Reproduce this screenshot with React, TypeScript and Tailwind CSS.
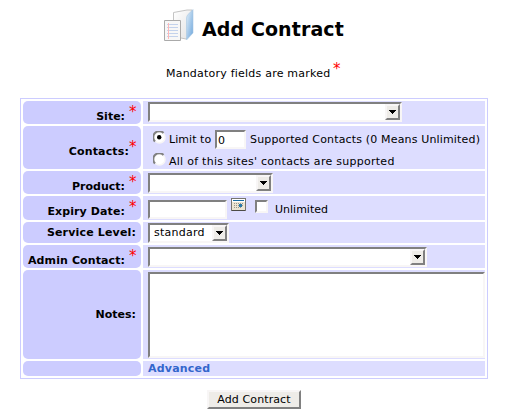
import type { ReactNode } from "react";

const sunken =
  "border-2 border-t-[#808080] border-l-[#808080] border-r-[#f8f6f6] border-b-[#f8f6f6] bg-white";

function Star({ className = "" }: { className?: string }) {
  return (
    <span className={`block h-4 w-[7px] shrink-0 text-[15px] leading-4 text-[#ff0000] ${className}`}>*</span>
  );
}

function Arrow() {
  return (
    <span className="flex h-4 w-[15px] shrink-0 items-center justify-center border-2 border-t-[#f8f6f6] border-l-[#f8f6f6] border-r-[#808080] border-b-[#808080] bg-[#eeece8]">
      <svg width="7" height="4" viewBox="0 0 7 4" shapeRendering="crispEdges">
        <path d="M0 0h7v1h-1v1h-1v1h-1v1h-1v-1h-1v-1h-1v-1h-1z" />
      </svg>
    </span>
  );
}

function Select({ className, children }: { className: string; children?: ReactNode }) {
  return (
    <div className={`flex h-5 items-start justify-between ${sunken} ${className}`}>
      <span className="pl-1 leading-[15px] tracking-[0.25px]">{children}</span>
      <Arrow />
    </div>
  );
}

function Row({
  height,
  label,
  labelTop = "",
  tracking = "",
  star,
  tight,
  children,
}: {
  height: string;
  label?: string;
  labelTop?: string;
  tracking?: string;
  star?: string;
  tight?: boolean;
  children: ReactNode;
}) {
  return (
    <div className={`flex gap-[2px] ${height}`}>
      <div className="flex w-[118px] items-start justify-end rounded-[5px] bg-[#ccccff] pr-[5px] font-bold">
        <span className={`${labelTop} ${tracking} whitespace-nowrap`}>{label}</span>
        {star && <Star className={`font-normal ${star} ${tight ? "" : "ml-1"}`} />}
      </div>
      <div className="w-[342px] bg-[#ddddff] pl-[5px]">{children}</div>
    </div>
  );
}

function Radio({ checked }: { checked?: boolean }) {
  return (
    <svg className="shrink-0" width="13" height="13" viewBox="0 0 13 13">
      <circle cx="6.5" cy="6.5" r="5.5" fill="#fff" stroke="#f8f6f6" strokeWidth="1.5" />
      <path d="M2 10.5A5.5 5.5 0 0 1 10.5 2" fill="none" stroke="#808080" strokeWidth="2" />
      {checked && <circle cx="6.2" cy="6.2" r="2.2" />}
    </svg>
  );
}

function FolderIcon() {
  return (
    <svg width="30" height="33" viewBox="0 0 30 33">
      <defs>
        <linearGradient id="folder" x1="0" y1="0" x2="1" y2="1">
          <stop stopColor="#e3eff8" />
          <stop offset="1" stopColor="#6ba5dc" />
        </linearGradient>
        <linearGradient id="paper" x1="0" y1="0" x2="1" y2="1">
          <stop stopColor="#fff" />
          <stop offset="1" stopColor="#e2e2e2" />
        </linearGradient>
      </defs>
      <path d="M9.5 3.5 23 1h5v23l-6 6-5-1H9.5z" fill="url(#paper)" stroke="#c4c4c4" />
      <path d="M22.5 9q0-2 2-4L29 .5V24l-6.5 7z" fill="url(#folder)" stroke="#a8c8e2" strokeWidth=".6" />
      <path d="M.5 11.5h16v20H.5z" fill="#f7f7f7" stroke="#aaa" />
      <path d="M3 15.5h11M3 18.5h11M3 21.5h11M3 24.5h11M3 27.5h11" stroke="#c3d2ec" />
      <path d="M4.5 14v16" stroke="#ffb7b7" />
    </svg>
  );
}

function CalendarIcon() {
  return (
    <svg width="15" height="13" viewBox="0 0 15 13" shapeRendering="crispEdges">
      <rect x="0" y="0" width="15" height="13" rx="1" fill="#77756e" />
      <path d="M1 1h13v11H1z" fill="#ece5d3" />
      <path d="M1 1h13v3H1z" fill="#fff" />
      <path d="M2 2.5h11" stroke="#186ba0" />
      <path d="M3 5.5h10M3 7.5h10M3 9.5h8" stroke="#99958e" strokeDasharray="1 1" />
      <path d="M8 6h3v3H8z" fill="#2879a9" />
      <path d="M1 12.5h13" stroke="#4c4b47" />
    </svg>
  );
}

export default function App() {
  return (
    <div className="h-[417px] w-[524px] overflow-hidden bg-white font-['DejaVu_Sans',sans-serif] text-[11px] leading-[13px] text-black">
      <div className="flex h-[61px] items-start pt-[9px] pl-[164px]">
        <FolderIcon />
        <h1 className="mt-[8px] ml-[8px] text-[19px] leading-6 font-bold tracking-[0.1px] whitespace-nowrap">Add Contract</h1>
      </div>
      <div className="flex h-[37px] items-start pl-[166px]">
        <span className="mt-[6px] w-[167px] tracking-[0.22px] whitespace-nowrap">Mandatory fields are marked</span>
        <Star />
      </div>
      <div className="ml-5 flex h-[281px] w-[468px] flex-col gap-[2px] border border-[#ccccff] p-[2px]">
        <Row height="h-[23px]" label="Site:" labelTop="mt-[9px]" star="mt-[3px]">
          <div className="pt-px"><Select className="w-[254px]" /></div>
        </Row>
        <Row height="h-[43px]" label="Contacts:" labelTop="mt-[19px]" tracking="tracking-[0.15px]" star="mt-[13px]" tight>
          <div className="flex h-[22px] items-start pt-[5px] pl-[5px]">
            <Radio checked />
            <span className="mt-[2px] ml-[3px] w-[46px] tracking-[0.05px] whitespace-nowrap">Limit to</span>
            <div className={`-mt-px h-[19px] w-[31px] pt-[2px] pl-px ${sunken}`}>0</div>
            <span className="mt-[2px] ml-1 tracking-[0.16px] whitespace-nowrap">Supported Contacts (0 Means Unlimited)</span>
          </div>
          <div className="flex items-start pt-[5px] pl-[5px]">
            <Radio />
            <span className="mt-[2px] ml-[3px] tracking-[0.27px] whitespace-nowrap">All of this sites' contacts are supported</span>
          </div>
        </Row>
        <Row height="h-[23px]" label="Product:" labelTop="mt-[9px]" star="mt-[3px]">
          <div className="pt-[2px]"><Select className="w-[125px]" /></div>
        </Row>
        <Row height="h-[24px]" label="Expiry Date:" labelTop="mt-[9px]" tracking="tracking-[0.1px]" star="mt-[3px]">
          <div className="flex items-start">
            <div className={`mt-1 h-[19px] w-[79px] ${sunken}`} />
            <div className="mt-[2px] ml-1"><CalendarIcon /></div>
            <div className={`mt-[4px] ml-[9px] size-[13px] ${sunken}`} />
            <span className="mt-[7px] ml-[7px]">Unlimited</span>
          </div>
        </Row>
        <Row height="h-[21px]" label="Service Level:" labelTop="mt-[4px]" tracking="tracking-[0.16px]">
          <div className="pt-px"><Select className="w-[81px]">standard</Select></div>
        </Row>
        <Row height="h-[23px]" label="Admin Contact:" labelTop="mt-[9px]" tracking="tracking-[0.1px]" star="mt-[3px]">
          <div className="pt-[2px]"><Select className="w-[279px]" /></div>
        </Row>
        <Row height="h-[89px]" label="Notes:" labelTop="mt-[38px]">
          <div className="pt-[2px]"><div className={`h-[86px] w-[337px] ${sunken}`} /></div>
        </Row>
        <Row height="h-[15px]">
          <span className="block pt-px font-bold tracking-[0.2px] text-[#3366cc]">Advanced</span>
        </Row>
      </div>
      <button className="mt-[11px] ml-[207px] flex h-[19px] w-[94px] items-center justify-center border-2 border-t-[#f8f6f6] border-l-[#f8f6f6] border-r-[#808080] border-b-[#808080] bg-[#eeece8] tracking-[0.1px] whitespace-nowrap">
        Add Contract
      </button>
    </div>
  );
}
